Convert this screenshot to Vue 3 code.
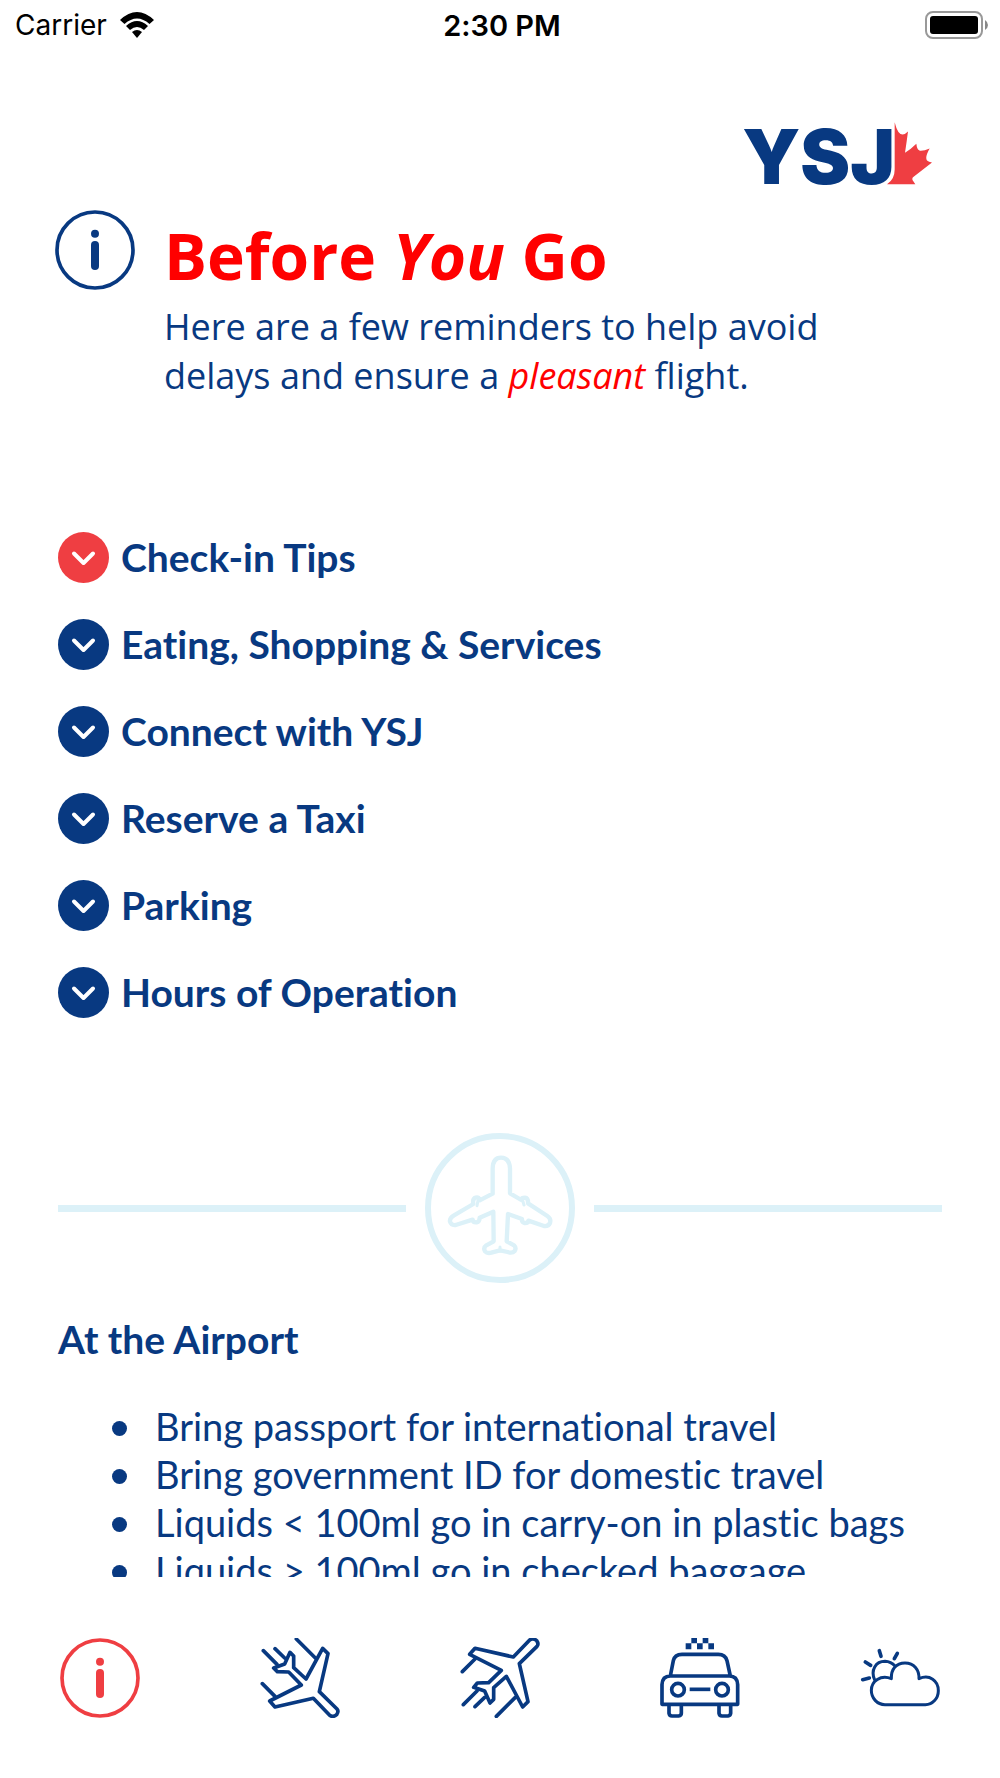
<script setup>
  import { ref } from 'vue';

  const sections = [
    'Check-in Tips',
    'Eating, Shopping & Services',
    'Connect with YSJ',
    'Reserve a Taxi',
    'Parking',
    'Hours of Operation',
  ];

  const airportTips = [
    'Bring passport for international travel',
    'Bring government ID for domestic travel',
    'Liquids < 100ml go in carry-on in plastic bags',
    'Liquids > 100ml go in checked baggage',
  ];

  const tabs = [
    { id: 'info', label: 'Before you go' },
    { id: 'arrivals', label: 'Arrivals' },
    { id: 'departures', label: 'Departures' },
    { id: 'taxi', label: 'Taxi' },
    { id: 'weather', label: 'Weather' },
  ];

  const activeSection = ref(0);
  const activeTab = ref('info');
</script>

<template>
  <div class="app">
    <div class="status-bar">
      <div class="carrier">
        <span>Carrier</span>
        <svg class="wifi" viewBox="0 0 34 26">
          <path d="M0 8 Q17 -8 34 8 L29.500 12 Q17 1 4.500 12 Z" />
          <path d="M6 14 Q17 4 28 14 L24 18 Q17 12 10 18 Z" />
          <path d="M12 20 Q17 16 22 20 L17 26 Z" />
        </svg>
      </div>
      <span class="time">2:30 PM</span>
      <svg class="battery" viewBox="0 0 64 28">
        <rect x="1" y="1" width="56" height="26" rx="7" fill="none" stroke="#999" stroke-width="2" />
        <rect x="5" y="5" width="48" height="18" rx="3" />
        <path d="M60 9 Q63 11 63 14 Q63 17 60 19 Z" fill="#888" />
      </svg>
    </div>

    <main>
      <div class="logo">
        <span>YSJ</span>
        <svg class="leaf" viewBox="472 366 135 188">
          <path d="M495 366 Q504 403 519 403 Q526 403 535 394 Q531 425 526 458 Q544 447 560 431 Q562 450 571 452 Q582 453 600 445 Q585 471 592 481 Q597 486 607 487 L550 531 Q546 536 550 542 L557 552 H472 Q495 538 495 508 Z" />
        </svg>
      </div>

      <header>
        <svg class="icon" viewBox="60 54 240 240">
          <circle cx="180" cy="174" r="114" />
          <path class="bar" d="M180 159 V222" />
          <circle class="dot" cx="180" cy="125" r="12" />
        </svg>
        <div class="intro">
          <h1>Before <em>You</em> Go</h1>
          <p>Here are a few reminders to help avoid delays and ensure a <em>pleasant</em> flight.</p>
        </div>
      </header>

      <ul class="sections">
        <li v-for="(section, index) in sections" :key="section">
          <button :class="{ active: index === activeSection }" @click="activeSection = index">
            <svg class="chevron" viewBox="0 0 51 51">
              <circle cx="25.500" cy="25.500" r="25.500" />
              <path d="M16 21.500 L25.500 31 L35 21.500" />
            </svg>
            {{ section }}
          </button>
        </li>
      </ul>

      <div class="divider">
        <svg viewBox="77 68 450 450">
          <circle cx="302" cy="293" r="216" stroke-width="18" />
          <path stroke-width="13" d="M280 250 V174 Q281 142 305 142 Q330 142 332 174 V249 L366 269 V267 Q367 262 377 262 Q387 263 386 279 L444 317 Q456 325 452 338 Q447 349 434 347 L387 331 Q386 339 375 338 Q367 336 368 326 L326 311 L322 393 L344 405 Q352 413 346 422 Q339 430 325 425 L302 420 L279 426 Q264 431 257 423 Q251 412 261 405 L283 393 L282 304 L241 322 Q241 334 232 336 Q221 337 220 328 L169 344 Q156 346 152 334 Q150 323 164 315 L222 281 Q219 265 229 262 Q240 259 241 270 Z" />
          <path stroke-width="9" d="M236 270 L233 286 M370 270 L374 284 M302 410 V422" />
        </svg>
      </div>

      <section>
        <h2>At the Airport</h2>
        <ul class="tips">
          <li v-for="tip in airportTips" :key="tip">{{ tip }}</li>
        </ul>
      </section>
    </main>

    <nav>
      <button
        v-for="tab in tabs"
        :key="tab.id"
        :class="{ active: tab.id === activeTab }"
        :aria-label="tab.label"
        @click="activeTab = tab.id">
        <svg class="icon" viewBox="60 54 240 240">
          <g v-if="tab.id === 'info'">
            <circle cx="180" cy="174" r="114" />
            <path class="bar" d="M180 159 V222" />
            <circle class="dot" cx="180" cy="125" r="12" />
          </g>
          <g v-else-if="tab.id === 'arrivals'">
            <path d="M248 85 L264 101 L238 215 L291 267 Q297 274 290 284 Q279 293 269 286 L220 235 L105 261 L89 243 L184 195 L146 156 L112 155 L101 144 L134 132 L150 97 L161 108 V143 L198 177 Z" />
            <path d="M169 57 L226 114 M70 92 L111 133 M105 86 L134 114 M67 191 L105 229" />
          </g>
          <g v-else-if="tab.id === 'departures'">
            <path d="M248 261 L264 245 L238 131 L291 79 Q297 72 290 62 Q279 53 269 60 L220 111 L105 85 L89 103 L184 151 L146 188 L112 189 L101 202 L134 213 L150 249 L161 238 V203 L199 169 Z" />
            <path d="M169 289 L226 232 M70 254 L111 213 M105 260 L134 232 M67 155 L105 117" />
          </g>
          <g v-else-if="tab.id === 'taxi'">
            <path d="M66 253 V194 Q67 168 91 168 H268 Q292 168 293 194 V253 Z M91 168 L100 122 Q104 103 126 103 H235 Q256 103 261 122 L271 168 M87 253 V280 Q88 288 96 288 H116 Q124 287 124 280 V253 M237 253 V280 Q238 288 246 288 H264 Q271 287 272 280 V253" />
            <circle cx="114" cy="209" r="19" />
            <circle cx="246" cy="209" r="19" />
            <path class="butt" d="M149 208 H211" />
            <path class="fill" d="M154 54 h17 v16 h17 v-16 h17 v16 h17 v18 h-17 v-18 h-17 v18 h-17 v-18 h-17 v18 h-17 v-18 h17 Z" />
          </g>
          <g v-else>
            <path class="thin" d="M135 254 C111 254 94 234 94 211 C94 184 122 163 154 176 C153 148 168 129 195 129 C222 129 238 149 237 176 C269 162 295 182 295 212 C295 235 278 254 256 254 Z M104 180 C91 150 107 124 135 124 Q153 125 165 138" />
            <path d="M68 179 L88 174 M76 126 L92 136 M118 92 L123 109 M172 100 L163 116" />
          </g>
        </svg>
      </button>
    </nav>
  </div>
</template>

<style>
  body{
    margin: 0;
    background-color: white;
  }
</style>

<style scoped>
  .app{
    height: 100vh;
    display: flex;
    flex-direction: column;
    color: #083981;
    font-family: Lato, sans-serif;
    font-variant-ligatures: none;
  }
  ul, h1, h2, p{
    margin: 0;
    padding: 0;
  }
  button{
    border: none;
    padding: 0;
    background: none;
    color: inherit;
    font: inherit;
    font-variant-ligatures: none;
    cursor: pointer;
  }

  .status-bar{
    height: 50px;
    flex-shrink: 0;
    padding: 0 11px 0 15px;
    display: grid;
    grid-template-columns: 1fr auto 1fr;
    align-items: center;
    color: black;
    font-family: Inter, sans-serif;
    font-size: 28px;
  }
  .carrier{
    display: flex;
    align-items: center;
    gap: 13px;
  }
  .wifi{
    width: 34px;
    height: 26px;
  }
  .time{
    font-size: 29px;
    font-weight: 600;
  }
  .battery{
    width: 64px;
    height: 28px;
    justify-self: end;
  }

  main{
    flex: 1;
    min-height: 0;
    overflow: hidden;
    padding: 72px 58px 0;
  }
  .logo{
    display: flex;
    justify-content: flex-end;
    align-items: flex-end;
    padding-right: 10px;
    height: 63px;
    font-family: Inter, sans-serif;
    font-size: 75px;
    font-weight: 900;
    line-height: 56px;
  }
  .leaf{
    width: 45px;
    height: 63px;
    margin-left: -8px;
    fill: #ef3e42;
  }

  .icon{
    width: 80px;
    height: 80px;
    flex-shrink: 0;
    fill: none;
    stroke: currentColor;
    stroke-width: 11px;
    stroke-linecap: round;
    stroke-linejoin: round;
  }
  .icon .bar{
    stroke-width: 24px;
  }
  .icon .dot, .icon .fill{
    fill: currentColor;
    stroke: none;
  }
  .icon .butt{
    stroke-linecap: butt;
  }
  .icon .thin{
    stroke-width: 9px;
  }

  header{
    display: flex;
    gap: 29px;
    margin: 25px 0 0 -3px;
    font-family: "Open Sans", sans-serif;
  }
  h1{
    color: red;
    font-size: 64px;
    line-height: 92px;
  }
  .intro{
    padding-right: 60px;
  }
  .intro p{
    font-size: 36px;
    line-height: 49px;
  }
  em{
    color: red;
  }

  .sections{
    margin-top: 132px;
    list-style: none;
    display: grid;
    gap: 36px;
  }
  .sections button{
    display: flex;
    align-items: center;
    gap: 12px;
    font-size: 39px;
    font-weight: bold;
    line-height: 51px;
  }
  .chevron{
    width: 51px;
    height: 51px;
    fill: currentColor;
  }
  .active .chevron{
    fill: #ef3e42;
  }
  .chevron path{
    fill: none;
    stroke: white;
    stroke-width: 4px;
    stroke-linecap: round;
    stroke-linejoin: round;
  }

  .divider{
    display: flex;
    align-items: center;
    gap: 19px;
    margin: 115px 0 32px;
  }
  .divider::before, .divider::after{
    content: "";
    flex: 1;
    height: 7px;
    background-color: #dcf1f8;
  }
  .divider svg{
    width: 150px;
    height: 150px;
    fill: none;
    stroke: #dcf1f8;
    stroke-linecap: round;
    stroke-linejoin: round;
  }

  h2{
    font-size: 39px;
    line-height: 48px;
  }
  .tips{
    margin-top: 39px;
    padding-left: 54px;
    list-style: none;
    font-size: 38px;
    line-height: 48px;
  }
  .tips li{
    display: flex;
    align-items: center;
    gap: 28px;
  }
  .tips li::before{
    content: "";
    width: 15px;
    height: 15px;
    margin-top: 5px;
    border-radius: 50%;
    background-color: currentColor;
  }

  nav{
    height: 201px;
    flex-shrink: 0;
    display: grid;
    grid-template-columns: repeat(5, 1fr);
    justify-items: center;
    align-items: center;
  }
  nav .active{
    color: #ef3e42;
  }
  nav .icon{
    display: block;
  }
</style>
